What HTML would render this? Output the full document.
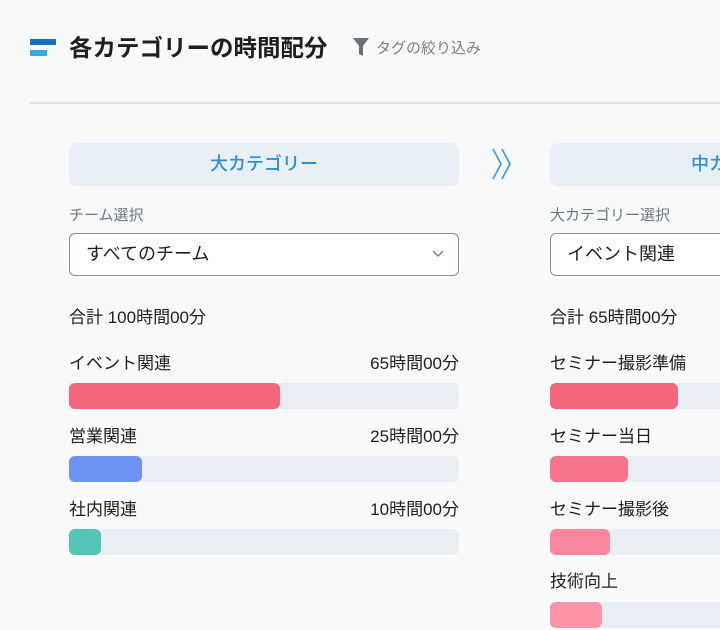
<!DOCTYPE html>
<html><head><meta charset="utf-8"><style>
*{margin:0;padding:0;box-sizing:border-box}
html,body{width:720px;height:630px;overflow:hidden}
body{background:#f7f9fb;font-family:"Liberation Sans","Noto Sans CJK JP",sans-serif;color:#1d1f22}
#w{position:relative;width:720px;height:630px;overflow:hidden}
.a{position:absolute;white-space:nowrap}
.hd{position:absolute;top:143px;height:43px;background:#e9eff6;border-radius:8px;color:#2b8fd9;font-size:18px;line-height:43px;text-align:center;font-weight:500;white-space:nowrap;overflow:hidden}
.lb{position:absolute;font-size:15px;color:#6f757c;white-space:nowrap}
.sel{position:absolute;top:233px;height:43px;border:1.5px solid #8a9099;border-radius:6px;background:#fff;font-size:18px;line-height:40px;padding-left:16px;white-space:nowrap}
.t{position:absolute;font-size:17px;line-height:22px;white-space:nowrap}
.r{text-align:right;width:200px}
.tr{position:absolute;height:26px;background:#e9eef5;border-radius:6px}
.br{position:absolute;height:26px;border-radius:6px}
</style></head><body><div id="w">
<div class="a" style="left:30px;top:39px;width:26px;height:6px;background:#1a6fc0"></div>
<div class="a" style="left:30px;top:50px;width:17px;height:6px;background:#35a9e5"></div>
<div class="a" style="left:69px;top:32px;font-size:23.5px;font-weight:bold;line-height:32px">各カテゴリーの時間配分</div>
<svg class="a" style="left:353px;top:38px" width="16" height="18" viewBox="0 0 16 18"><path d="M0 0H16L10 8V18L6 16V8Z" fill="#6b7078"/></svg>
<div class="a" style="left:376px;top:37px;font-size:15px;color:#7a8088">タグの絞り込み</div>
<div class="a" style="left:30px;top:102px;width:690px;height:2px;background:#dde3ea"></div>

<div class="hd" style="left:69px;width:390px">大カテゴリー</div>
<svg class="a" style="left:490px;top:148px" width="28" height="34" viewBox="0 0 28 34"><path d="M3 1L11 16L3 31M12 1L20 16L12 31" fill="none" stroke="#3d95dc" stroke-width="1.6"/></svg>
<div class="hd" style="left:550px;width:200px;text-align:left;padding-left:141px">中カテゴリー</div>

<div class="lb" style="left:69px;top:204px">チーム選択</div>
<div class="lb" style="left:550px;top:204px">大カテゴリー選択</div>
<div class="sel" style="left:69px;width:390px">すべてのチーム</div>
<svg class="a" style="left:432px;top:250px" width="12" height="8" viewBox="0 0 12 8"><path d="M1 1L6 6L11 1" fill="none" stroke="#777" stroke-width="1.3"/></svg>
<div class="sel" style="left:550px;width:200px">イベント関連</div>

<div class="t" style="left:69px;top:307px">合計 100時間00分</div>
<div class="t" style="left:550px;top:307px">合計 65時間00分</div>

<div class="t" style="left:69px;top:353px">イベント関連</div><div class="t r" style="left:259px;top:353px">65時間00分</div>
<div class="tr" style="left:69px;top:383px;width:390px"></div><div class="br" style="left:69px;top:383px;width:211px;background:#f7667f"></div>
<div class="t" style="left:69px;top:426px">営業関連</div><div class="t r" style="left:259px;top:426px">25時間00分</div>
<div class="tr" style="left:69px;top:456px;width:390px"></div><div class="br" style="left:69px;top:456px;width:73px;background:#6d93f4"></div>
<div class="t" style="left:69px;top:499px">社内関連</div><div class="t r" style="left:259px;top:499px">10時間00分</div>
<div class="tr" style="left:69px;top:529px;width:390px"></div><div class="br" style="left:69px;top:529px;width:32px;background:#52c5b6"></div>

<div class="t" style="left:550px;top:353px">セミナー撮影準備</div>
<div class="tr" style="left:550px;top:383px;width:200px"></div><div class="br" style="left:550px;top:383px;width:128px;background:#f7667f"></div>
<div class="t" style="left:550px;top:426px">セミナー当日</div>
<div class="tr" style="left:550px;top:456px;width:200px"></div><div class="br" style="left:550px;top:456px;width:78px;background:#f8738c"></div>
<div class="t" style="left:550px;top:499px">セミナー撮影後</div>
<div class="tr" style="left:550px;top:529px;width:200px"></div><div class="br" style="left:550px;top:529px;width:60px;background:#f9869a"></div>
<div class="t" style="left:550px;top:571px">技術向上</div>
<div class="tr" style="left:550px;top:602px;width:200px"></div><div class="br" style="left:550px;top:602px;width:52px;background:#fa94a6"></div>
</div></body></html>
